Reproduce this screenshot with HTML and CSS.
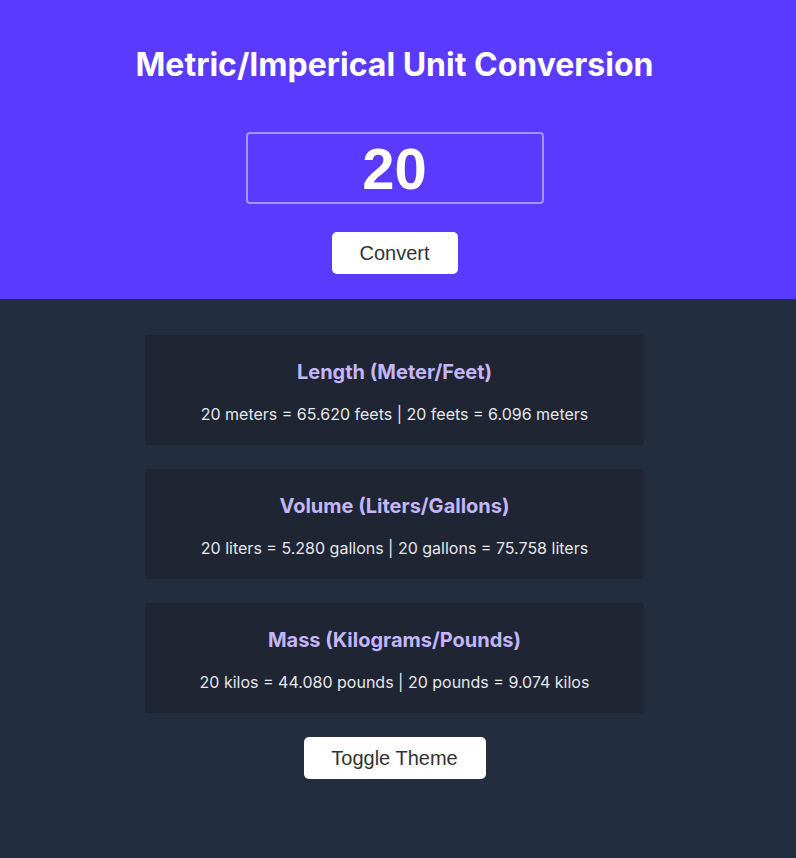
FILE: index.html
```html
<!DOCTYPE html>
<html>
<head>
<meta charset="utf-8">
<link rel="stylesheet" href="styles.css">
</head>
<body>
<header class="hero">
  <h1 class="title">Metric/Imperical Unit Conversion</h1>
  <input class="num-input" type="text" value="20">
  <button class="btn">Convert</button>
</header>
<main class="results">
  <section class="card">
    <h2 class="card-title">Length (Meter/Feet)</h2>
    <p class="card-text">20 meters = 65.620 feets | 20 feets = 6.096 meters</p>
  </section>
  <section class="card">
    <h2 class="card-title">Volume (Liters/Gallons)</h2>
    <p class="card-text">20 liters = 5.280 gallons | 20 gallons = 75.758 liters</p>
  </section>
  <section class="card">
    <h2 class="card-title">Mass (Kilograms/Pounds)</h2>
    <p class="card-text">20 kilos = 44.080 pounds | 20 pounds = 9.074 kilos</p>
  </section>
  <button class="btn btn-wide">Toggle Theme</button>
</main>
</body>
</html>
```
FILE: styles.css
```css
* { box-sizing: border-box; }
html, body { margin: 0; padding: 0; }
body {
  background: #222d3f;
  font-family: Inter, "Noto Sans", sans-serif;
  min-height: 858px;
}
.hero {
  background: #5b3aff;
  display: flex;
  flex-direction: column;
  align-items: center;
  padding: 45px 7px 25px 0;
}
.title {
  margin: 0;
  color: #fff;
  font-family: Inter, sans-serif;
  font-weight: 700;
  font-size: 32px;
  line-height: 40px;
}
.num-input {
  margin-top: 47px;
  width: 298px;
  height: 72px;
  border: 2px solid rgba(255,255,255,0.45);
  border-radius: 4px;
  background: transparent;
  color: #fff;
  text-align: center;
  font-family: "Liberation Sans", Arial, sans-serif;
  font-weight: 700;
  font-size: 58px;
  padding: 0;
  outline: none;
}
.btn {
  margin-top: 28px;
  width: 126px;
  height: 42px;
  background: #fff;
  border: none;
  border-radius: 5px;
  color: #333;
  font-family: "Liberation Sans", Arial, sans-serif;
  font-size: 20px;
  padding: 0;
}
.btn-wide {
  width: 182px;
}
.results {
  display: flex;
  flex-direction: column;
  align-items: center;
  padding: 36px 7px 0 0;
  gap: 24.5px;
}
.results .btn-wide { margin-top: 0; }
.card {
  width: 499px;
  background: #1f2533;
  border-radius: 4px;
  padding: 25px 20px 21px;
  text-align: center;
}
.card-title {
  margin: 0;
  color: #c4b5fd;
  font-weight: 700;
  font-size: 20px;
  line-height: 24px;
}
.card-text {
  margin: 19.5px 0 0;
  color: #e5e7eb;
  font-size: 16px;
  line-height: 20px;
}
```
